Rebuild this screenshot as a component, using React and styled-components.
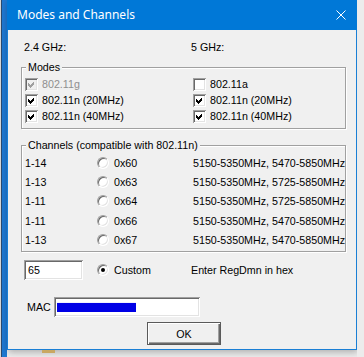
import React from "react";
import styled, { createGlobalStyle } from "styled-components";

const GlobalStyle = createGlobalStyle`
  html, body { margin: 0; padding: 0; }
  body {
    background: #ececec;
    font-family: "Liberation Sans", Arial, sans-serif;
    font-size: 10.7px;
    color: #000;
    white-space: nowrap;
  }
`;

const Page = styled.div`
  display: flex;
  width: 364px;
  height: 357px;
  overflow: hidden;
  background: #ececec;
`;

const LeftEdge = styled.div`
  flex: none;
  width: 7px;
  height: 357px;
  background: linear-gradient(to right, #d6d6d6 0 1px, #2a4a70 1px 2px, #1f78d1 2px 7px);
`;

const Middle = styled.div`
  flex: none;
  width: 350px;
  display: flex;
  flex-direction: column;
`;

const Window = styled.div`
  width: 350px;
  height: 350px;
  display: flex;
  flex-direction: column;
  box-shadow: 1px 2px 7px rgba(0, 0, 0, 0.28);
`;

const TitleBar = styled.div`
  flex: none;
  height: 30px;
  background: #0078d7;
  display: flex;
  align-items: center;
  justify-content: space-between;
  padding: 0 11px 1px 10px;
  box-sizing: border-box;
`;

const Title = styled.span`
  font-family: "Noto Sans", "Open Sans", sans-serif;
  font-size: 12px;
  color: #fff;
`;

const Client = styled.div`
  flex: 1;
  background: #f0f0f0;
  border: 1px solid #1a7fd5;
  border-top: 0;
  display: flex;
  flex-direction: column;
  padding-top: 10px;
`;

const BandHeader = styled.div`
  display: grid;
  grid-template-columns: 167px 1fr;
  padding-left: 16px;
  line-height: 14px;
`;

const Group = styled.div`
  position: relative;
  box-sizing: border-box;
  width: 325px;
  margin: ${(p) => p.$mt}px 0 0 13px;
  padding: ${(p) => p.$pt}px 0 ${(p) => p.$pb}px 3px;
  border: 1px solid #a0a0a0;
  box-shadow: inset 1px 1px 0 #fff, 1px 1px 0 #fff;
`;

const GroupLabel = styled.span`
  position: absolute;
  top: -7px;
  left: 4px;
  padding: 0 2px;
  line-height: 13px;
  background: #f0f0f0;
`;

const ModesGrid = styled.div`
  display: grid;
  grid-template-columns: 168px 1fr;
  grid-auto-rows: 16px;
`;

const CheckItem = styled.label`
  display: flex;
  align-items: center;
  gap: 4px;
  color: ${(p) => (p.$disabled ? "#8f8f8f" : "#000")};
`;

const Box = styled.span`
  flex: none;
  width: 13px;
  height: 13px;
  background: ${(p) => (p.$disabled ? "#f0f0f0" : "#fff")};
  box-shadow: inset 1px 1px 0 #a0a0a0, inset -1px -1px 0 #fff,
    inset 2px 2px 0 #696969, inset -2px -2px 0 #e3e3e3;
  display: block;
`;

const Checkbox = ({ checked, disabled, children }) => (
  <CheckItem $disabled={disabled}>
    <Box $disabled={disabled}>
      {checked && (
        <svg width="13" height="13" viewBox="0 0 13 13" shapeRendering="crispEdges">
          <polygon points="3,5 5,7 9,3 9,6 5,10 3,8" fill={disabled ? "#a0a0a0" : "#000"} />
        </svg>
      )}
    </Box>
    <span>{children}</span>
  </CheckItem>
);

const ChannelGrid = styled.div`
  display: grid;
  grid-template-columns: 72px 96px 1fr;
  grid-auto-rows: 19.3px;
  align-items: center;
`;

const RadioItem = styled.label`
  display: flex;
  align-items: center;
  gap: 5px;
`;

const RadioCircle = styled.span`
  flex: none;
  box-sizing: border-box;
  width: 12px;
  height: 12px;
  border-radius: 50%;
  background: #fff;
  border: 1px solid;
  border-color: #a0a0a0 #fff #fff #a0a0a0;
  box-shadow: inset 1px 1px 0 #696969, inset -1px -1px 0 #e3e3e3;
  display: flex;
  align-items: center;
  justify-content: center;
  &::after {
    content: "";
    display: ${(p) => (p.$checked ? "block" : "none")};
    width: 4px;
    height: 4px;
    border-radius: 50%;
    background: #000;
  }
`;

const Radio = ({ checked, children }) => (
  <RadioItem>
    <RadioCircle $checked={checked} />
    <span>{children}</span>
  </RadioItem>
);

const CustomRow = styled.div`
  display: grid;
  grid-template-columns: 73px 94px 1fr;
  align-items: center;
  margin-top: 8px;
  padding-left: 16px;
`;

const Edit = styled.div`
  box-sizing: border-box;
  width: ${(p) => p.$w}px;
  height: 20px;
  background: #fff;
  box-shadow: inset 1px 1px 0 #a0a0a0, inset -1px -1px 0 #fff,
    inset 2px 2px 0 #696969, inset -2px -2px 0 #e3e3e3;
  padding: ${(p) => p.$pad};
  line-height: 20px;
`;

const MacRow = styled.div`
  display: grid;
  grid-template-columns: 27px 146px;
  align-items: center;
  margin-top: 17px;
  padding-left: 19px;
`;

const Redacted = styled.span`
  display: block;
  width: 79px;
  height: 10px;
  background: linear-gradient(#f0f0ff 0 1px, transparent 1px),
    #0000e6;
  background-size: 3px 10px, auto;
  background-repeat: repeat-x;
`;

const OkButton = styled.button`
  align-self: flex-start;
  margin: 5px 0 0 139px;
  width: 74px;
  height: 23px;
  border: 1px solid #5a5a5a;
  background: #f0f0f0;
  box-shadow: inset 1px 1px 0 #fff, inset -1px -1px 0 #696969,
    inset -2px -2px 0 #a0a0a0;
  font: inherit;
  color: #000;
  padding: 0;
`;

const RightEdge = styled.div`
  flex: none;
  width: 7px;
  height: 357px;
  background: #ececec;
`;

const BottomStrip = styled.div`
  flex: 1;
  padding-left: 35px;
`;

const TanMark = styled.div`
  width: 13px;
  height: 3px;
  background: #c9a862;
`;

const channels = [
  ["1-14", "0x60", "5150-5350MHz, 5470-5850MHz"],
  ["1-13", "0x63", "5150-5350MHz, 5725-5850MHz"],
  ["1-11", "0x64", "5150-5350MHz, 5725-5850MHz"],
  ["1-11", "0x66", "5150-5350MHz, 5470-5850MHz"],
  ["1-13", "0x67", "5150-5350MHz, 5470-5850MHz"],
];

export default function App() {
  return (
    <>
      <GlobalStyle />
      <Page>
        <LeftEdge />
        <Middle>
          <Window>
            <TitleBar>
              <Title>Modes and Channels</Title>
              <svg width="10" height="10" viewBox="0 0 10 10">
                <path d="M0.5 0.5 L9.5 9.5 M9.5 0.5 L0.5 9.5" stroke="#fff" strokeWidth="1" />
              </svg>
            </TitleBar>
            <Client>
              <BandHeader>
                <span>2.4 GHz:</span>
                <span>5 GHz:</span>
              </BandHeader>
              <Group $mt={13} $pt={8} $pb={4}>
                <GroupLabel>Modes</GroupLabel>
                <ModesGrid>
                  <Checkbox checked disabled>802.11g</Checkbox>
                  <Checkbox>802.11a</Checkbox>
                  <Checkbox checked>802.11n (20MHz)</Checkbox>
                  <Checkbox checked>802.11n (20MHz)</Checkbox>
                  <Checkbox checked>802.11n (40MHz)</Checkbox>
                  <Checkbox checked>802.11n (40MHz)</Checkbox>
                </ModesGrid>
              </Group>
              <Group $mt={16} $pt={7} $pb={2}>
                <GroupLabel>Channels (compatible with 802.11n)</GroupLabel>
                <ChannelGrid>
                  {channels.map(([range, code, freq]) => (
                    <React.Fragment key={code}>
                      <span>{range}</span>
                      <Radio>{code}</Radio>
                      <span>{freq}</span>
                    </React.Fragment>
                  ))}
                </ChannelGrid>
              </Group>
              <CustomRow>
                <Edit $w={59} $pad="0 0 0 4px">65</Edit>
                <Radio checked>Custom</Radio>
                <span>Enter RegDmn in hex</span>
              </CustomRow>
              <MacRow>
                <span>MAC</span>
                <Edit $w={146} $pad="5px 0 0 3px">
                  <Redacted />
                </Edit>
              </MacRow>
              <OkButton>OK</OkButton>
            </Client>
          </Window>
          <BottomStrip>
            <TanMark />
          </BottomStrip>
        </Middle>
        <RightEdge />
      </Page>
    </>
  );
}
